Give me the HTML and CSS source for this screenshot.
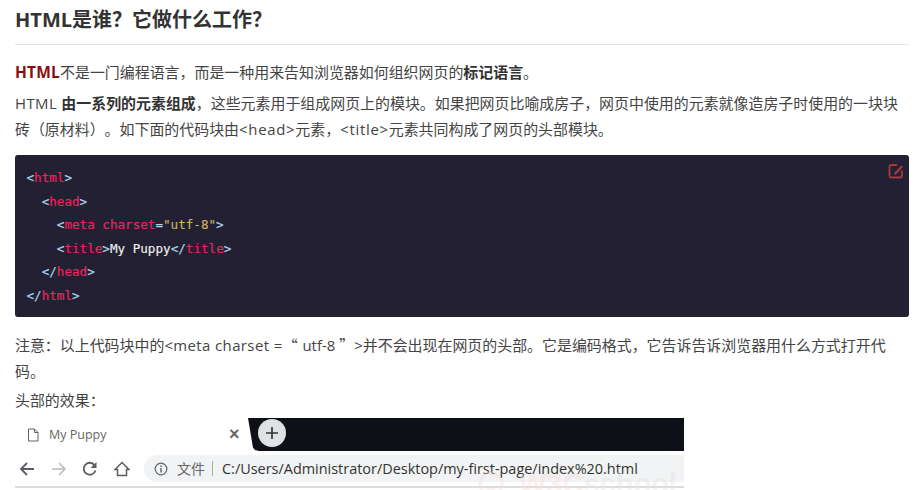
FILE: index.html
```html
<!DOCTYPE html>
<html lang="zh-CN">
<head>
<meta charset="utf-8">
<title>HTML是谁？它做什么工作？</title>
<link rel="stylesheet" href="styles.css">
</head>
<body>
<article class="article">
  <h2 class="title">HTML是谁？它做什么工作？</h2>
  <p class="para first"><strong class="brand">HTML</strong>不是一门编程语言，而是一种用来告知浏览器如何组织网页的<strong>标记语言</strong>。</p>
  <p class="para second"><span class="lead">HTML </span><strong>由一系列的元素组成</strong>，这些元素用于组成网页上的模块。如果把网页比喻成房子，网页中使用的元素就像造房子时使用的一块块砖（原材料）。如下面的代码块由<span class="tag">&lt;head&gt;</span>元素，<span class="tag">&lt;title&gt;</span>元素共同构成了网页的头部模块。</p>
  <div class="code">
    <svg class="edit" viewBox="0 0 16 16" width="16" height="16" aria-hidden="true"><path d="M9 2H3a1.500 1.500 0 0 0-1.500 1.500v9.500A1.500 1.500 0 0 0 3 14.500h9.500A1.500 1.500 0 0 0 14 13V7.500" fill="none" stroke="#a33a3f" stroke-width="1.800"/><path d="M6.500 9.800 13.300 2.500 15 4 8.200 11.300 6 11.800z" fill="#a33a3f"/></svg>
    <pre class="pre"><span class="p">&lt;</span><span class="t">html</span><span class="p">&gt;</span>
  <span class="p">&lt;</span><span class="t">head</span><span class="p">&gt;</span>
    <span class="p">&lt;</span><span class="t">meta charset</span><span class="p">=</span><span class="s">"utf-8"</span><span class="p">&gt;</span>
    <span class="p">&lt;</span><span class="t">title</span><span class="p">&gt;</span><span class="w">My Puppy</span><span class="p">&lt;/</span><span class="t">title</span><span class="p">&gt;</span>
  <span class="p">&lt;/</span><span class="t">head</span><span class="p">&gt;</span>
<span class="p">&lt;/</span><span class="t">html</span><span class="p">&gt;</span></pre>
  </div>
  <p class="para note">注意：以上代码块中的<span class="metatag">&lt;meta charset =</span><span class="cjk">“</span><span class="utf"> utf-8</span><span class="cjk closing">”</span>&gt;并不会出现在网页的头部。它是编码格式，它告诉告诉浏览器用什么方式打开代码。</p>
  <p class="para after">头部的效果：</p>
  <div class="shot">
    <div class="tabbar">
      <div class="tab">
        <svg class="page" viewBox="0 0 12 14" width="12" height="14" aria-hidden="true"><path d="M1.500 1h6l3.500 3.500V13h-9.500z M7.500 1v3.500H11" fill="none" stroke="#5f6368" stroke-width="1"/></svg>
        <span class="tabname">My Puppy</span>
        <span class="close">×</span>
      </div>
      <div class="strip"><span class="plus"><svg viewBox="0 0 14 14" width="14" height="14" aria-hidden="true"><path d="M7 1v12M1 7h12" stroke="#333" stroke-width="1.700"/></svg></span></div>
    </div>
    <div class="toolbar">
      <svg class="nav" viewBox="0 0 16 16" width="16" height="16" aria-hidden="true"><path d="M15 8H2M8 2 2 8l6 6" fill="none" stroke="#5a5d61" stroke-width="1.800"/></svg>
      <svg class="nav" viewBox="0 0 16 16" width="16" height="16" aria-hidden="true"><path d="M1 8h13M8 2l6 6-6 6" fill="none" stroke="#b8babd" stroke-width="1.500"/></svg>
      <svg class="nav" viewBox="0 0 16 16" width="16" height="16" aria-hidden="true"><path d="M13.500 9.500A6 6 0 1 1 12.300 3.800" fill="none" stroke="#5a5d61" stroke-width="1.800"/><path d="M14.500 1v6h-6z" fill="#5a5d61"/></svg>
      <svg class="nav" viewBox="0 0 16 16" width="16" height="16" aria-hidden="true"><path d="M8 1.500 15 8.500H12.500V14.500H3.500V8.500H1z" fill="none" stroke="#5a5d61" stroke-width="1.500" stroke-linejoin="miter"/></svg>
      <div class="omni">
        <svg class="info" viewBox="0 0 14 14" width="14" height="14" aria-hidden="true"><circle cx="7" cy="7" r="5.800" fill="none" stroke="#5f6368" stroke-width="1.200"/><path d="M7 6v4.500M7 3.500v1.500" stroke="#5f6368" stroke-width="1.400"/></svg>
        <span class="scheme">文件</span>
        <span class="url">C:/Users/Administrator/Desktop/my-first-page/index%20.html</span>
      </div>
    </div>
    <div class="rule"></div>
    <div class="mark">
      <svg class="marklogo" viewBox="0 0 26 26" width="26" height="26" aria-hidden="true"><circle cx="13" cy="13" r="11" fill="none" stroke="#f6dcd6" stroke-width="3"/><path d="M7 15c3 5 9 5 12 0" fill="none" stroke="#f6dcd6" stroke-width="2"/></svg>
      <span class="markw3c">W3C</span><span class="markschool">school</span>
    </div>
  </div>
</article>
</body>
</html>
```
FILE: styles.css
```css
html, body { margin: 0; padding: 0; background: #fff; height: 490px; overflow: hidden; }
body { font-family: "Open Sans", "Noto Sans CJK SC", sans-serif; color: #444; text-spacing-trim: space-all; }
.article { padding: 0 12px 0 15px; }
.title { margin: 0; height: 44px; border-bottom: 1px solid #e6e6e6; font-size: 20px; line-height: 39px; font-weight: 700; color: #333; font-family: "Open Sans", "Noto Sans CJK SC", sans-serif; }
.para { margin: 0; font-size: 14.950px; line-height: 26px; }
.para strong { color: #333; font-weight: 700; }
.para .brand { color: #8b0e0e; font-size: 15.500px; letter-spacing: .2px; }
.first { margin-top: 14px; }
.second { margin-top: 5px; }
.lead { letter-spacing: .4px; }
.tag { letter-spacing: .7px; }
.metatag { letter-spacing: .4px; }
.cjk { font-family: "Noto Sans CJK SC", sans-serif; }
.utf { margin-left: 1px; }
.closing { margin-left: 4px; }
.code { position: relative; margin: 13px 0 0; height: 162px; background: #222032; border-radius: 3px; box-sizing: border-box; padding: 11px 11.500px; }
.pre { margin: 0; font-family: "DejaVu Sans Mono", monospace; font-size: 12.600px; line-height: 23.500px; color: #e8e8e8; -webkit-text-stroke: .15px currentColor; }
.p { color: #a9d3e6; }
.t { color: #f0225f; }
.s { color: #cdb45c; }
.w { color: #f0f0f0; }
.edit { position: absolute; top: 8px; right: 5px; }
.note { margin-top: 15px; }
.after { margin-top: 3px; }
.shot { position: relative; width: 669px; margin-top: 5px; overflow: hidden; height: 72px; }
.tabbar { display: flex; height: 33px; }
.tab { width: 233px; display: flex; align-items: center; padding-left: 12px; box-sizing: border-box; background: #fff; }
.page { margin-right: 10px; }
.tabname { font-size: 12.500px; color: #666; width: 180px; font-family: "Open Sans", sans-serif; }
.close { font-size: 18px; font-weight: 700; color: #666; font-family: "Liberation Sans", sans-serif; }
.strip { flex: 1; background: #0d1016; clip-path: polygon(0 0, 100% 0, 100% 100%, 11px 100%, 7px 97%, 5px 90%); display: flex; align-items: flex-start; padding: 1px 0 0 10px; }
.plus { width: 28px; height: 28px; border-radius: 50%; background: #dfe1e5; display: flex; align-items: center; justify-content: center; }
.toolbar { display: flex; align-items: center; height: 33px; padding-left: 4px; margin-top: 1px; }
.nav { margin-right: 15.500px; }
.omni { flex: 1; display: flex; align-items: center; height: 27px; background: #f1f3f4; border-radius: 14px 0 0 14px; padding-left: 10px; margin-left: -1px; }
.info { margin-right: 9px; }
.scheme { font-size: 14px; color: #666; padding-right: 7px; border-right: 1px solid #aaa; line-height: 15px; }
.url { margin-left: 9px; font-size: 14.450px; color: #333; font-family: "Open Sans", sans-serif; white-space: nowrap; }
.rule { height: 2px; background: #ddd; margin-top: 1px; }
.mark { position: absolute; left: 463px; top: 50px; display: flex; align-items: center; gap: 15px; font-size: 29px; line-height: 32px; font-family: "Liberation Sans", sans-serif; font-weight: 700; opacity: .4; }
.marklogo { flex: none; }
.markw3c { color: #f6dcd6; margin-right: -15px; }
.markschool { color: #e4e4e4; }
```
